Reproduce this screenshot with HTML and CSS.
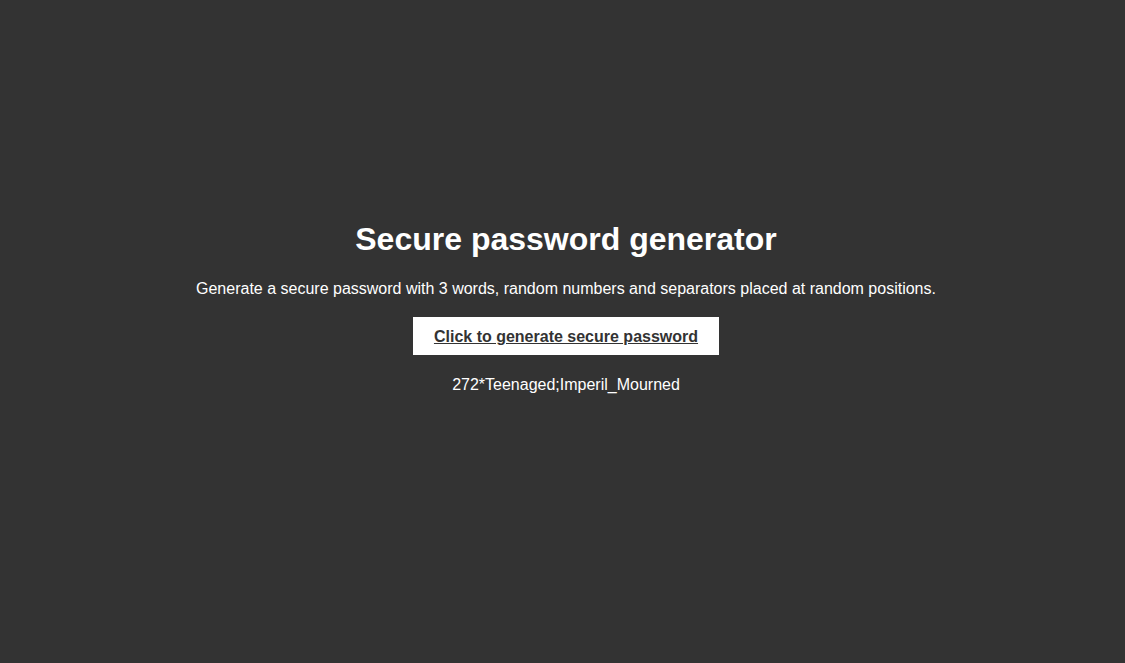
FILE: index.html
```html
<!DOCTYPE html>
<html>
<head>
<meta charset="utf-8">
<link rel="stylesheet" href="styles.css">
</head>
<body>
<main class="page">
  <h1 class="title">Secure password generator</h1>
  <p class="desc">Generate a secure password with 3 words, random numbers and separators placed at random positions.</p>
  <button class="gen-btn">Click to generate secure password</button>
  <p class="result">272*Teenaged;Imperil_Mourned</p>
</main>
</body>
</html>
```
FILE: styles.css
```css
html, body {
  margin: 0;
  padding: 0;
  height: 100%;
  background: #333333;
}
.page {
  box-sizing: border-box;
  min-height: 100%;
  padding: 221px 0 0 7px;
  display: flex;
  flex-direction: column;
  align-items: center;
  font-family: "Liberation Sans", Arial, sans-serif;
  color: #ffffff;
  text-align: center;
}
.title {
  font-size: 32px;
  line-height: 37px;
  font-weight: bold;
  margin: 0 0 22px;
}
.desc {
  font-size: 16px;
  line-height: 18px;
  margin: 0 0 19px;
}
.gen-btn {
  font-family: "Liberation Sans", Arial, sans-serif;
  font-size: 16px;
  line-height: 18px;
  font-weight: bold;
  color: #333333;
  text-decoration: underline;
  background: #ffffff;
  border: none;
  padding: 11px 21px 9px;
  cursor: pointer;
}
.result {
  font-size: 16px;
  line-height: 18px;
  margin: 21px 0 0;
}
```
